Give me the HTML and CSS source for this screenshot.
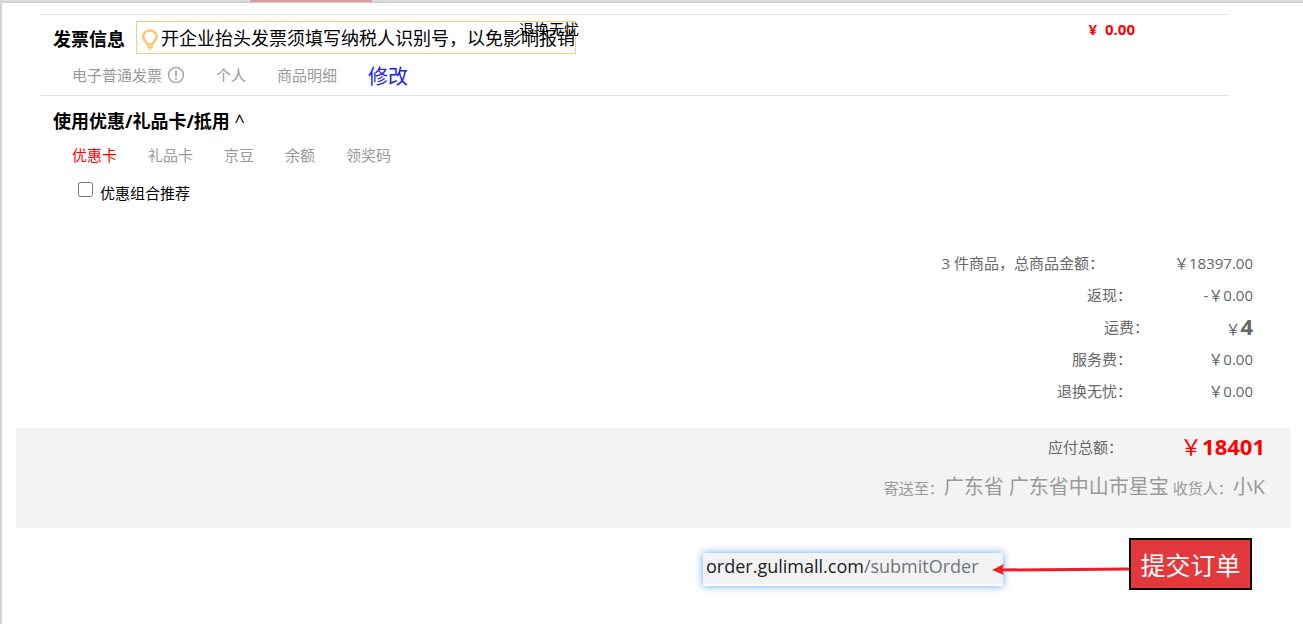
FILE: index.html
```html
<!DOCTYPE html>
<html lang="zh-CN">
<head>
<meta charset="utf-8">
<title>订单结算</title>
<link rel="stylesheet" href="styles.css">
</head>
<body>
<div class="topbar"><span class="topbar-mark"></span></div>
<main class="page">
  <section class="invoice">
    <div class="invoice-head">
      <h2 class="title">发票信息</h2>
      <p class="notice">
        <svg class="bulb" width="18" height="22" viewBox="0 0 18 22" fill="none" stroke="#fcc878" stroke-width="2.6"><path d="M6.2 15.2C6.2 12.500 2.200 12 2.200 7.800A6.700 6.300 0 0 1 15.600 7.800C15.600 12 11.600 12.500 11.600 15.200Z"/><path d="M6 18h6M7.500 20.300h3" stroke-width="1.800"/></svg>
        <span>开企业抬头发票须填写纳税人识别号，以免影响报销</span>
      </p>
    </div>
    <div class="invoice-info">
      <span class="kind">电子普通发票
        <svg width="18" height="18" viewBox="0 0 18 18" fill="none" stroke="#a8a8a8" stroke-width="1.500"><circle cx="9" cy="9" r="7.500"/><path d="M9 4.500v6M9 12v1.800" stroke-width="1.800"/></svg>
      </span>
      <span>个人</span>
      <span>商品明细</span>
      <a class="edit" href="#">修改</a>
    </div>
    <span class="worry-label">退换无忧</span>
    <span class="worry-price">¥&nbsp; 0.00</span>
  </section>

  <section class="discount">
    <h2 class="title">使用优惠/礼品卡/抵用 <span class="caret">^</span></h2>
    <nav class="tabs">
      <a class="tab tab-active" href="#">优惠卡</a>
      <a class="tab" href="#">礼品卡</a>
      <a class="tab" href="#">京豆</a>
      <a class="tab" href="#">余额</a>
      <a class="tab" href="#">领奖码</a>
    </nav>
    <div class="combo">
      <input type="checkbox" id="combo">
      <label for="combo">优惠组合推荐</label>
    </div>
  </section>

  <dl class="summary">
    <div class="row"><dt>3 件商品，总商品金额：</dt><dd class="wide">￥18397.00</dd></div>
    <div class="row"><dt>返现：</dt><dd>-￥0.00</dd></div>
    <div class="row"><dt>运费：</dt><dd class="narrow">￥<b class="freight">4</b></dd></div>
    <div class="row"><dt>服务费：</dt><dd>￥0.00</dd></div>
    <div class="row"><dt>退换无忧：</dt><dd>￥0.00</dd></div>
  </dl>

  <section class="total">
    <div class="total-line"><span>应付总额：</span><span class="amount">￥<b>18401</b></span></div>
    <p class="address">寄送至：<span class="big">广东省 广东省中山市星宝</span> 收货人：<span class="big">小K</span></p>
  </section>

  <div class="submit">
    <div class="callout">
      <div class="url">order.gulimall.com<span class="path">/submitOrder</span></div>
      <svg class="arrow" width="137" height="14" viewBox="0 0 137 14"><path d="M8 8L137 7" stroke="#ee1c25" stroke-width="3"/><path d="M0 8L12 2L10 8L12 13Z" fill="#ee1c25"/></svg>
    </div>
    <button class="submit-btn" type="button">提交订单</button>
  </div>
</main>
</body>
</html>
```
FILE: styles.css
```css
* {
  box-sizing: border-box;
}

body {
  margin: 0;
  min-height: 100vh;
  background: #fff;
  border-left: 2px solid #d2d2d2;
  font-family: "Open Sans", "Noto Sans CJK SC", sans-serif;
  font-size: 15px;
  line-height: 22px;
  font-weight: 400;
  color: #000;
}

h2, p, dl, dd {
  margin: 0;
}

a {
  color: inherit;
  text-decoration: none;
}

.topbar {
  height: 3px;
  background: linear-gradient(#e4e4e4, #c8c8c8);
}

.topbar-mark {
  display: block;
  width: 122px;
  height: 2px;
  margin-left: 248px;
  background: #e39a9a;
}

.page {
  padding: 11px 12px 0 14px;
}

.invoice {
  position: relative;
  height: 82px;
  margin: 0 62px 0 25px;
  padding: 6px 0 0 12px;
  border-top: 1px solid #e3e3e3;
  border-bottom: 1px solid #e3e3e3;
}

.invoice-head {
  display: flex;
  align-items: center;
  gap: 11px;
}

.title {
  font-size: 18px;
  line-height: 26px;
  font-weight: 700;
}

.invoice-head .title {
  padding-top: 2px;
}

.notice {
  display: flex;
  align-items: center;
  gap: 2px;
  height: 33px;
  padding-left: 4px;
  border: 1px solid #edd28b;
  font-size: 18px;
  line-height: 20px;
  white-space: nowrap;
}

.bulb {
  margin-top: 4px;
}

.invoice-info {
  display: flex;
  align-items: center;
  gap: 31px;
  margin-top: 8px;
  padding-left: 19px;
  color: #999;
}

.kind {
  display: flex;
  align-items: center;
  gap: 5px;
}

.edit {
  padding-top: 4px;
  font-size: 20px;
  color: #2020f0;
}

.worry-label,
.worry-price {
  position: absolute;
  top: 3px;
}

.worry-label {
  left: 478px;
}

.worry-price {
  right: 94px;
  font-weight: 700;
  color: #f00;
}

.discount {
  padding: 12px 0 0 37px;
}

.caret {
  font-weight: 400;
}

.tabs {
  display: flex;
  gap: 31px;
  margin-top: 10px;
  padding-left: 19px;
}

.tab {
  color: #999;
}

.tab-active {
  color: #f00;
}

.combo {
  display: flex;
  gap: 7px;
  margin-top: 16px;
  padding-left: 25px;
}

.combo input {
  width: 15px;
  height: 15px;
  margin: 0;
}

.summary {
  padding: 43px 38px 0 0;
  color: #666;
}

.row {
  display: flex;
  justify-content: flex-end;
  align-items: center;
  height: 32px;
}

.row dd {
  width: 121px;
  text-align: right;
}

.row .wide {
  width: 149px;
}

.row .narrow {
  width: 104px;
}

.freight {
  font-size: 22px;
}

.total {
  height: 100px;
  margin-top: 21px;
  padding: 3px 26px 0 0;
  background: #f3f3f3;
  text-align: right;
  color: #666;
}

.total-line {
  display: flex;
  justify-content: flex-end;
  align-items: center;
  height: 32px;
}

.amount {
  width: 142px;
  padding-bottom: 2px;
  font-size: 22px;
  color: #f00;
}

.address {
  margin-top: 8px;
  line-height: 32px;
  color: #999;
}

.big {
  font-size: 20px;
}

.submit {
  display: flex;
  justify-content: flex-end;
  align-items: center;
  padding: 10px 39px 0 0;
}

.callout {
  display: flex;
  align-items: center;
  padding-top: 10px;
}

.url {
  width: 300px;
  height: 33px;
  padding-left: 3px;
  border-bottom: 2px solid #fff;
  background: #f1f3f4;
  box-shadow: 0 0 8px #5ea6f5;
  font-size: 18px;
  line-height: 26px;
  color: #202124;
}

.path {
  color: #70757a;
}

.arrow {
  margin-left: -11px;
}

.submit-btn {
  width: 123px;
  height: 52px;
  padding: 0;
  border: 2px solid #000;
  background: #e4393c;
  font-family: inherit;
  font-size: 25px;
  color: #fff;
}
```
